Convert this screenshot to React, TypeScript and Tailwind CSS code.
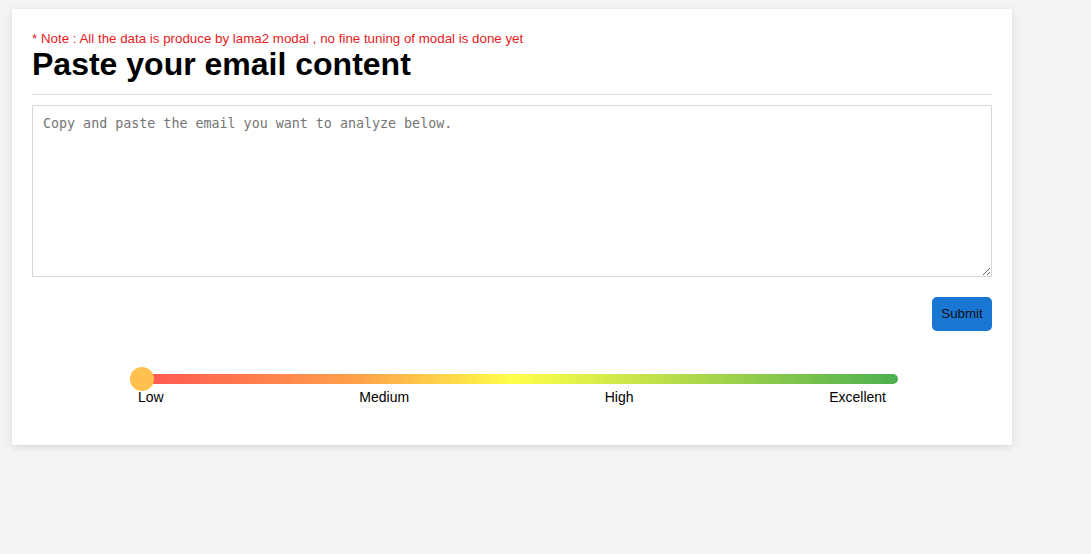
import React from "react";

export default function App() {
  return (
    <div className="min-h-[554px] w-full bg-[#f4f4f4] pt-[9px] pl-[12px]" style={{ fontFamily: '"Liberation Sans", Arial, sans-serif' }}>
      <div className="w-[1000px] bg-white shadow-[0_2px_8px_rgba(0,0,0,0.12)] px-[20px] pt-[22px] pb-[40px]">
        <p className="text-[13.33px] leading-[15px] text-[#e8201c] m-0">* Note : All the data is produce by lama2 modal , no fine tuning of modal is done yet</p>
        <h1 className="text-[32px] leading-[36px] font-bold text-black m-0">Paste your email content</h1>
        <div className="mt-[12px] h-px bg-[#dcdcdc]" />
        <textarea
          className="mt-[10px] block w-full h-[172px] border border-[#d6d6d6] px-[10px] pt-[10px] pb-[10px] text-[13.33px] leading-[16px] text-[#333] placeholder:text-[#757575] outline-none resize-y"
          style={{ fontFamily: '"DejaVu Sans Mono", monospace' }}
          placeholder="Copy and paste the email you want to analyze below."
        />
        <div className="flex justify-end mt-[20px]">
          <button className="w-[60px] h-[34px] rounded-[5px] bg-[#1976d2] text-[13.33px] text-[#111]">Submit</button>
        </div>
        <div className="mt-[36px] w-[768px] mx-auto">
          <div className="relative h-[24px] flex items-center">
            <div className="relative left-[2px] w-full h-[10px] rounded-full bg-[linear-gradient(to_right,#ff5252,#ffa24a_30%,#ffff4a_50%,#a9d64a_75%,#4caf50)]" />
            <div className="absolute left-[2px] top-0 w-[24px] h-[24px] rounded-full bg-[#ffc04d]" />
          </div>
          <div className="flex justify-between px-[10px] text-[14px] leading-[16px] text-black mt-[-2px]">
            <span>Low</span>
            <span>Medium</span>
            <span>High</span>
            <span>Excellent</span>
          </div>
        </div>
      </div>
    </div>
  );
}
